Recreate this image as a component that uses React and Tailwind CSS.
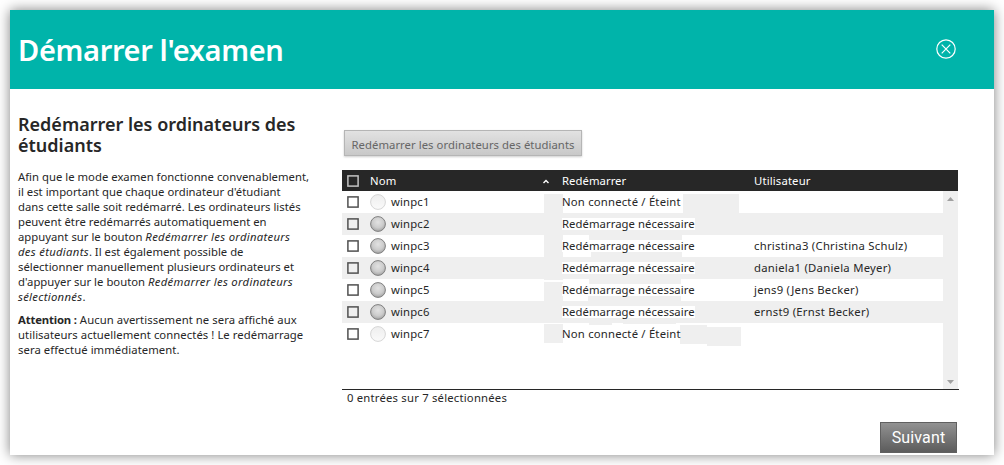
const rows = [
  ["winpc1", "Non connecté / Éteint", "", true],
  ["winpc2", "Redémarrage nécessaire", "", false],
  ["winpc3", "Redémarrage nécessaire", "christina3 (Christina Schulz)", false],
  ["winpc4", "Redémarrage nécessaire", "daniela1 (Daniela Meyer)", false],
  ["winpc5", "Redémarrage nécessaire", "jens9 (Jens Becker)", false],
  ["winpc6", "Redémarrage nécessaire", "ernst9 (Ernst Becker)", false],
  ["winpc7", "Non connecté / Éteint", "", true],
];

const patches = [
  "left-[202px] top-[3px] w-[19px] h-[86px]",
  "left-[341px] top-[3px] w-[56px] h-[19px]",
  "left-[247px] top-[44px] w-[93px] h-[5px]",
  "left-[249px] top-[61px] w-[91px] h-[5px]",
  "left-[202px] top-[91px] w-[19px] h-[19px]",
  "left-[247px] top-[88px] w-[92px] h-[5px]",
  "left-[246px] top-[105px] w-[93px] h-[5px]",
  "left-[247px] top-[132px] w-[23px] h-[2px]",
  "left-[281px] top-[132px] w-[53px] h-[1px]",
  "left-[202px] top-[133px] w-[19px] h-[19px]",
  "left-[338px] top-[134px] w-[27px] h-[19px]",
  "left-[365px] top-[136px] w-[34px] h-[19px]",
];

function Check({ className }) {
  return (
    <svg className={"h-3 w-3 shrink-0 " + className} viewBox="0 0 12 12" fill="none" stroke="currentColor" strokeWidth="1.5">
      <rect x="0.9" y="0.9" width="10.2" height="10.2" />
    </svg>
  );
}

function Dot({ off }) {
  return (
    <svg className="ml-[11px] h-4 w-4 shrink-0" viewBox="0 0 16 16">
      <defs>
        <radialGradient id="on" cx="50%" cy="38%" r="62%">
          <stop offset="0" stopColor="#e2e2e2" />
          <stop offset="0.6" stopColor="#cccccc" />
          <stop offset="1" stopColor="#a4a4a4" />
        </radialGradient>
        <linearGradient id="off" x2="0" y2="1">
          <stop offset="0" stopColor="#eeeeee" />
          <stop offset="1" stopColor="#fafafa" />
        </linearGradient>
      </defs>
      <circle cx="8" cy="8" r="7.4" fill={off ? "url(#off)" : "url(#on)"} stroke={off ? "#d6d6d6" : "#808080"} />
    </svg>
  );
}

export default function App() {
  return (
    <div className="h-[465px] w-[1004px] overflow-hidden bg-white p-[10px] font-['Noto_Sans',sans-serif] text-[11.3px] tracking-[0.15px] text-[#272727]">
      <div className="flex h-[445px] w-[984px] flex-col bg-white shadow-[0_0_12px_rgba(0,0,0,0.5)]">
        <header className="flex h-[79px] shrink-0 items-center justify-between bg-[#00b4aa] pr-[37px] pl-2">
          <h1 className="text-[29px] font-semibold tracking-[-0.34px] text-white">Démarrer l'examen</h1>
          <svg className="mb-[2px] h-[22px] w-[22px]" viewBox="0 0 22 22" fill="none" stroke="white" strokeWidth="1.2">
            <circle cx="11" cy="11" r="9.2" />
            <path d="M6.7 6.7l8.6 8.6M15.3 6.7l-8.6 8.6" />
          </svg>
        </header>
        <div className="flex h-[366px]">
          <section className="w-[332px] shrink-0 pt-[25px] pl-2 leading-[15px] whitespace-nowrap">
            <h2 className="mb-[13px] w-[290px] text-[18px] leading-[21px] font-semibold tracking-[0px] whitespace-normal">
              Redémarrer les ordinateurs des étudiants
            </h2>
            <p className="tracking-[0.01px] [&_i]:tracking-[0.3px]">
              Afin que le mode examen fonctionne convenablement,<br />
              il est important que chaque ordinateur d'étudiant<br />
              dans cette salle soit redémarré. Les ordinateurs listés<br />
              peuvent être redémarrés automatiquement en<br />
              appuyant sur le bouton <i>Redémarrer les ordinateurs</i><br />
              <i>des étudiants</i>. Il est également possible de<br />
              sélectionner manuellement plusieurs ordinateurs et<br />
              d'appuyer sur le bouton <i>Redémarrer les ordinateurs</i><br />
              <i>sélectionnés</i>.
            </p>
            <p className="mt-2 tracking-[0.06px]">
              <b className="tracking-[-0.15px]">Attention :</b> Aucun avertissement ne sera affiché aux<br />
              utilisateurs actuellement connectés ! Le redémarrage<br />
              sera effectué immédiatement.
            </p>
          </section>
          <main className="flex w-[617px] flex-col pt-[41px]">
            <button className="ml-[2px] h-[26px] w-[238px] shrink-0 border border-[#b5b5b5] bg-linear-to-b from-[#e2e2e2] to-[#c8c8c8] pt-1 tracking-[0.05px] whitespace-nowrap text-[#666] shadow-[0_1px_2px_rgba(0,0,0,0.2)]">
              Redémarrer les ordinateurs des étudiants
            </button>
            <div className="mt-[14px] flex h-[21px] w-[616px] shrink-0 items-center bg-[#272727] pt-px pl-[5px] text-white">
              <Check className="text-[#c4c4c4]" />
              <span className="ml-[11px] w-[173px]">Nom</span>
              <svg className="h-[5px] w-[6px]" viewBox="0 0 6 5" fill="none" stroke="white" strokeWidth="1.4"><path d="M.5 4L3 1.5L5.5 4" /></svg>
              <span className="ml-[13px] w-48 tracking-[0.05px]">Redémarrer</span>
              <span>Utilisateur</span>
            </div>
            <div className="relative flex h-[198px] w-[616px] shrink-0">
              <div className="w-[601px]">
                {rows.map(([name, state, user, off], i) => (
                  <div key={name} className={i % 2 ? "flex h-[22px] items-center bg-[#efefef] pl-[5px]" : "flex h-[22px] items-center pl-[5px]"}>
                    <Check className="text-[#505050]" />
                    <Dot off={off} />
                    <span className="ml-[5px] w-[171px]">{name}</span>
                    <span className="z-10 w-48"><span className={off ? "tracking-[0.2px]" : "block h-[12px] w-[133px] bg-white leading-[12px] tracking-[0.06px] whitespace-nowrap"}>{state}</span></span>
                    <span className="tracking-[0.25px] whitespace-nowrap">{user}</span>
                  </div>
                ))}
              </div>
              {patches.map((p) => <i key={p} className={"absolute bg-[#efefef] " + p} />)}
              <div className="flex w-[15px] flex-col items-center justify-between bg-[#efefef] pt-[6px] pb-[5px]">
                <svg className="h-[4px] w-[7px]" viewBox="0 0 7 4" fill="#a0a0a0"><path d="M3.5 0L7 4H0z" /></svg>
                <svg className="h-[4px] w-[7px]" viewBox="0 0 7 4" fill="#a0a0a0"><path d="M0 0H7L3.5 4z" /></svg>
              </div>
            </div>
            <p className="border-t border-[#272727] pl-[5px] leading-[15px] tracking-[0.2px]">0 entrées sur 7 sélectionnées</p>
            <button className="mt-[17px] mr-[2px] ml-auto h-[31px] w-[77px] border border-[#606060] bg-linear-to-b from-[#929292] to-[#5c5c5c] font-['Roboto',sans-serif] text-[16px] text-white">Suivant</button>
          </main>
        </div>
      </div>
    </div>
  );
}
